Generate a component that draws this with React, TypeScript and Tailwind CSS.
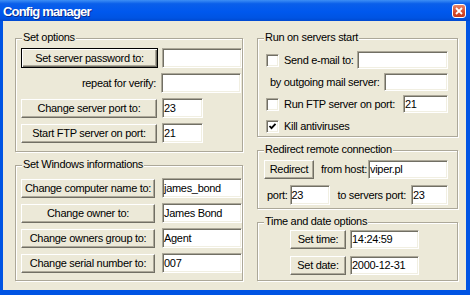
import React from 'react';

// classic 3D controls on the XP beige face
const btn =
  'h-[19px] shrink-0 bg-[#ECE9D8] border border-t-white border-l-white border-r-[#716F64] border-b-[#716F64] shadow-[inset_-1px_-1px_0_#ACA899] text-black leading-none flex items-center justify-center';
const defBtn =
  'h-[20px] shrink-0 bg-[#ECE9D8] border border-black shadow-[inset_1px_1px_0_#fff,inset_-1px_-1px_0_#716F64,inset_-2px_-2px_0_#ACA899] text-black leading-none flex items-center justify-center';
const field =
  'h-[20px] shrink-0 bg-white border border-t-[#ACA899] border-l-[#ACA899] border-b-white border-r-white shadow-[inset_1px_1px_0_#716F64,inset_-1px_-1px_0_#F1EFE2] pl-[1px] leading-none flex items-center text-black';

interface GroupProps {
  title: string;
  className?: string;
  children: React.ReactNode;
}

const Group: React.FC<GroupProps> = ({ title, className, children }) => (
  <div
    className={`relative border border-[#ACA899] shadow-[1px_1px_0_#fff,inset_1px_1px_0_#fff] ${className ?? ''}`}
  >
    <span className="absolute -top-[8px] left-[6px] px-[1px] bg-[#ECE9D8] leading-[13px]">
      {title}
    </span>
    {children}
  </div>
);

const Check: React.FC<{ checked?: boolean }> = ({ checked }) => (
  <span className="w-[13px] h-[13px] shrink-0 bg-white border border-t-[#ACA899] border-l-[#ACA899] border-b-white border-r-white shadow-[inset_1px_1px_0_#716F64,inset_-1px_-1px_0_#F1EFE2] flex items-center justify-center">
    {checked && (
      <svg width="9" height="9" viewBox="0 0 9 9">
        <path d="M1.5 4 L3.5 6.2 L7.5 1.8" fill="none" stroke="#000" strokeWidth="1.8" />
      </svg>
    )}
  </span>
);

const Field: React.FC<{ w: string; value?: string }> = ({ w, value }) => (
  <div className={`${field} ${w}`}>{value}</div>
);

export default function App() {
  return (
    <div className="w-[470px] h-[295px] bg-[#0054E3] flex flex-col font-['Liberation_Sans',sans-serif] text-[11px] tracking-[-0.3px] whitespace-nowrap text-black select-none">
      {/* title bar */}
      <div className="h-[21px] shrink-0 flex items-center justify-between pl-[3px] pr-[4px] bg-[linear-gradient(to_bottom,#3D8FF5_0%,#0A5FEA_18%,#0058EE_55%,#0054E3_85%,#0049D0_100%)]">
        <span className="text-white font-bold text-[13px] tracking-[-0.8px] leading-none pt-[1px] [text-shadow:1px_1px_0_#0A2A8A]">
          Config manager
        </span>
        <div className="w-[14px] h-[14px] rounded-[3px] border border-white bg-[linear-gradient(to_bottom,#E9866A,#D5492B_60%,#C43A1F)] flex items-center justify-center">
          <svg width="8" height="8" viewBox="0 0 8 8">
            <path d="M1 1 L7 7 M7 1 L1 7" stroke="#fff" strokeWidth="1.8" />
          </svg>
        </div>
      </div>

      {/* client area */}
      <div className="flex-1 ml-[3px] mr-[4px] mb-[5px] bg-[#ECE9D8] flex gap-[14px] pl-[12px] pt-[17px]">
        {/* left column */}
        <div className="w-[228px] flex flex-col gap-[13px]">
          <Group title="Set options" className="pt-[9px] pb-[8px] pl-[5px] flex flex-col gap-[5px]">
            <div className="flex items-center gap-[4px] h-[20px]">
              <div className={`${defBtn} w-[137px]`}>Set server password to:</div>
              <Field w="w-[80px]" />
            </div>
            <div className="flex items-center gap-[4px] h-[20px]">
              <div className="w-[136px] text-right pr-[1px]">repeat for verify:</div>
              <Field w="w-[80px]" />
            </div>
            <div className="flex items-center gap-[5px] h-[20px]">
              <div className={`${btn} w-[136px]`}>Change server port to:</div>
              <Field w="w-[41px]" value="23" />
            </div>
            <div className="flex items-center gap-[5px] h-[20px]">
              <div className={`${btn} w-[136px]`}>Start FTP server on port:</div>
              <Field w="w-[41px]" value="21" />
            </div>
          </Group>

          <Group title="Set Windows informations" className="pt-[12px] pb-[7px] pl-[5px] flex flex-col gap-[5px]">
            {[
              ['Change computer name to:', 'james_bond'],
              ['Change owner to:', 'James Bond'],
              ['Change owners group to:', 'Agent'],
              ['Change serial number to:', '007'],
            ].map(([label, value]) => (
              <div key={label} className="flex items-center gap-[7px] h-[20px]">
                <div className={`${btn} w-[134px]`}>{label}</div>
                <Field w="w-[80px]" value={value} />
              </div>
            ))}
          </Group>
        </div>

        {/* right column */}
        <div className="w-[201px] flex flex-col gap-[13px]">
          <Group title="Run on servers start" className="pt-[12px] pb-[1px] pl-[8px] pr-[9px] flex flex-col gap-[4px]">
            <div className="flex items-center h-[18px]">
              <Check />
              <span className="ml-[5px]">Send e-mail to:</span>
              <div className={`${field} !h-[18px] w-[91px] ml-auto`} />
            </div>
            <div className="flex items-center h-[18px]">
              <span className="ml-[4px]">by outgoing mail server:</span>
              <div className={`${field} !h-[18px] w-[64px] ml-auto`} />
            </div>
            <div className="flex items-center h-[18px]">
              <Check />
              <span className="ml-[5px]">Run FTP server on port:</span>
              <div className={`${field} !h-[18px] w-[45px] ml-auto`}>21</div>
            </div>
            <div className="flex items-center h-[18px]">
              <Check checked />
              <span className="ml-[5px]">Kill antiviruses</span>
            </div>
          </Group>

          <Group title="Redirect remote connection" className="pt-[9px] pb-[3px] pl-[6px] pr-[9px] flex flex-col gap-[6px]">
            <div className="flex items-center h-[19px]">
              <div className={`${btn} w-[50px]`}>Redirect</div>
              <span className="ml-[7px]">from host:</span>
              <div className={`${field} !h-[19px] w-[80px] ml-auto`}>viper.pl</div>
            </div>
            <div className="flex items-center h-[20px]">
              <span className="ml-[3px]">port:</span>
              <div className={`${field} w-[40px] ml-[2px]`}>23</div>
              <span className="ml-[8px]">to servers port:</span>
              <div className={`${field} w-[37px] ml-auto`}>23</div>
            </div>
          </Group>

          <Group title="Time and date options" className="pt-[7px] pb-[5px] pl-[32px] flex flex-col gap-[7px]">
            <div className="flex items-center gap-[4px] h-[19px]">
              <div className={`${btn} w-[56px]`}>Set time:</div>
              <div className={`${field} !h-[19px] w-[69px]`}>14:24:59</div>
            </div>
            <div className="flex items-center gap-[4px] h-[19px]">
              <div className={`${btn} w-[56px]`}>Set date:</div>
              <div className={`${field} !h-[19px] w-[69px]`}>2000-12-31</div>
            </div>
          </Group>
        </div>
      </div>
    </div>
  );
}
